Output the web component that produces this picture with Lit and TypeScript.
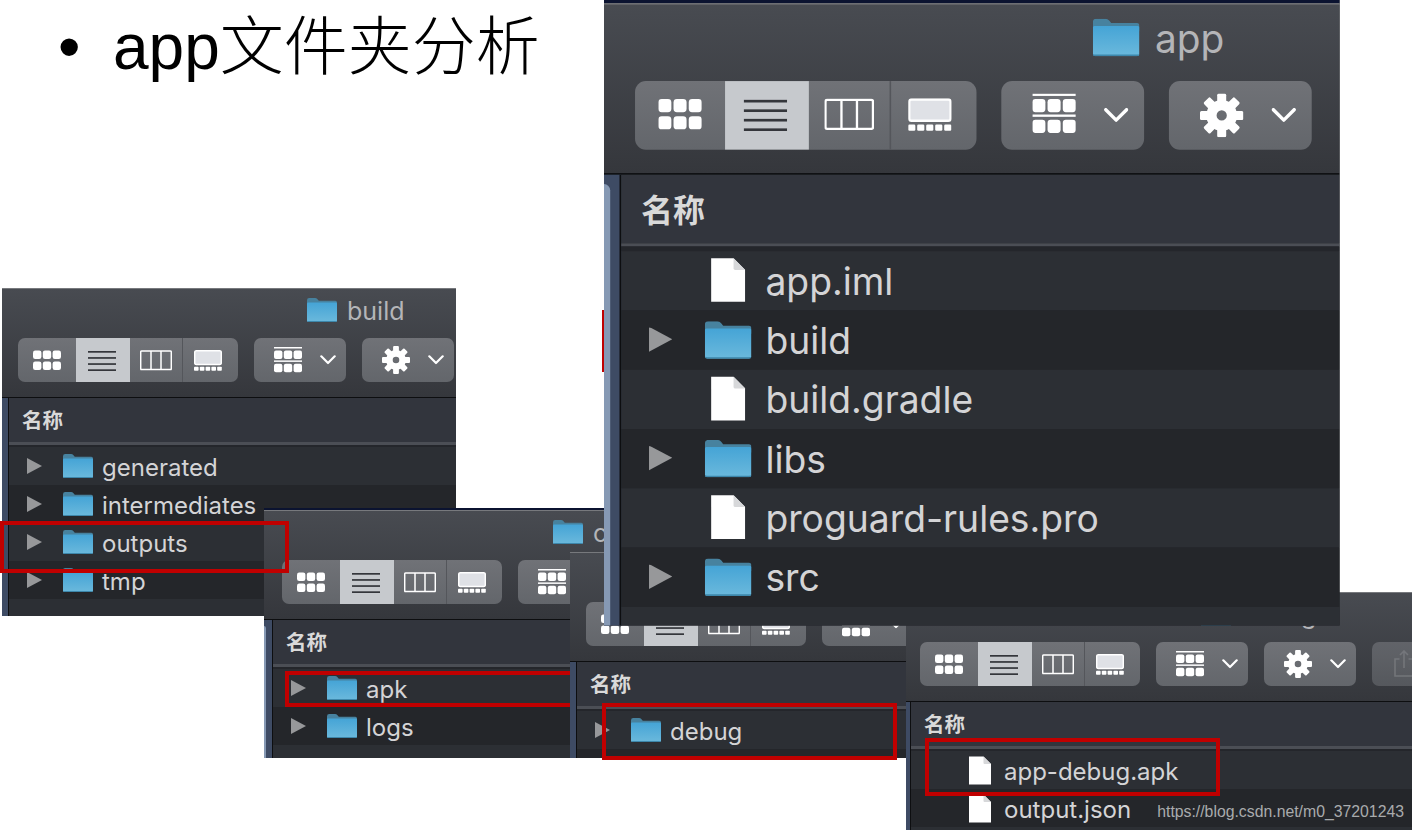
import { LitElement, html, css, svg } from "lit";
import { customElement, property } from "lit/decorators.js";

const folder = svg`<svg class="folder" viewBox="0 0 30 24" width="30" height="24">
  <defs><linearGradient id="fb" x1="0" y1="0" x2="0" y2="1"><stop offset="0" stop-color="#45a4d6"/><stop offset="1" stop-color="#6bb9dc"/></linearGradient></defs>
  <path d="M0 2.2Q0 0 2.2 0H8Q9.5 0 10.5 1.2L11.8 2.8H28.4Q30 2.8 30 4.6V8H0Z" fill="#47829f"/>
  <path d="M0 5.6Q0 4.6 1 4.6L29 4.6Q30 4.6 30 5.6V22.4Q30 24 28.4 24H1.6Q0 24 0 22.4Z" fill="url(#fb)"/>
  <path d="M0 22.4V22.6Q0 24 1.6 24H28.4Q30 24 30 22.6V22.4Q30 23 28.4 23H1.6Q0 23 0 22.4Z" fill="#3d87ab"/>
</svg>`;

const file = svg`<svg class="file" viewBox="0 0 22 28" width="22" height="29">
  <path d="M0 0H14.5L22 7.5V28H0Z" fill="#fff"/>
  <path d="M14.5 0L22 7.5H15.5Q14.5 7.5 14.5 6.5Z" fill="#d7d8da"/>
</svg>`;

const chevron = svg`<svg class="chev" viewBox="0 0 16 10" width="16" height="10"><path d="M1.3 1.3L8 8L14.7 1.3" fill="none" stroke="#fff" stroke-width="2.2" stroke-linecap="round" stroke-linejoin="round"/></svg>`;

const dots = (y: number[], x: number[], s: number, r: number) =>
  y.flatMap((yy) => x.map((xx) => svg`<rect x=${xx} y=${yy} width=${s} height=${s} rx=${r} fill="#fff"/>`));

const gridIcon = svg`<svg viewBox="0 0 28 21" width="28" height="21">${dots([0.5, 11.5], [0, 9.8, 19.6], 8.4, 2.2)}</svg>`;
const listIcon = svg`<svg viewBox="0 0 28 21" width="28" height="21">${[1, 7.1, 13.2, 19.3].map(
  (y) => svg`<rect x="0" y=${y} width="28" height="1.7" fill="#34363b"/>`
)}</svg>`;
const colsIcon = svg`<svg viewBox="0 0 32 21" width="32" height="21"><rect x=".7" y="1" width="30.6" height="18.6" rx="1" fill="none" stroke="#fff" stroke-width="1.5"/><path d="M11 1V20M21 1V20" stroke="#fff" stroke-width="1.5"/></svg>`;
const galleryIcon = svg`<svg viewBox="0 0 28 21" width="28" height="21"><rect x=".7" y=".8" width="26.6" height="13.6" rx="1.5" fill="#dfe1e6" stroke="#fff" stroke-width="1.5"/>${[0, 5.8, 11.6, 17.4, 23.2].map(
  (x) => svg`<rect x=${x} y="16.8" width="4.6" height="4" rx=".8" fill="#fff"/>`
)}</svg>`;
const arrangeIcon = svg`<svg viewBox="0 0 28 27" width="28" height="27"><rect y="0" width="28" height="1.5" fill="#fff"/><rect y="13.4" width="28" height="1.5" fill="#fff"/>${dots([3.5, 16.8], [0, 9.8, 19.6], 8.4, 2)}</svg>`;
const gearIcon = svg`<svg viewBox="-14 -14 28 28" width="28" height="28"><circle r="6.6" fill="none" stroke="#fff" stroke-width="6.6"/>${[0, 45, 90, 135, 180, 225, 270, 315].map(
  (a) => svg`<rect x="-2.9" y="-14" width="5.8" height="6" rx="1" fill="#fff" transform="rotate(${a})"/>`
)}</svg>`;
const shareIcon = svg`<svg viewBox="0 0 20 28" width="20" height="28"><path d="M5.5 9H1V26H19V9H14.5M10 18V1M6 5L10 1L14 5" fill="none" stroke="#8c8e92" stroke-width="1.6"/></svg>`;

interface Row {
  name: string;
  kind: "folder" | "file";
}

@customElement("finder-window")
class FinderWindow extends LitElement {
  @property({ type: Number }) left = 0;
  @property({ type: Number }) top = 0;
  @property({ type: Number }) w = 400;
  @property({ type: Number }) h = 300;
  @property({ type: Number }) sx = 1;
  @property({ type: Number }) sy = 1;
  @property({ type: Number }) crop = 0;
  @property({ type: Number }) navy = 0;
  @property({ type: Number }) titleAt = 300;
  @property() name = "";
  @property({ type: Boolean }) share = false;
  @property({ attribute: false }) rows: Row[] = [];

  static styles = css`
    :host {
      display: block;
      position: absolute;
      transform-origin: 0 0;
      overflow: hidden;
      background: #23252a;
      font-family: Inter, "Liberation Sans", sans-serif;
    }
    .navy {
      background: #0b1330;
    }
    .toolbar {
      height: 110px;
      box-sizing: border-box;
      border-top: 1px solid #77797d;
      border-bottom: 1px solid #0d0e10;
      background: linear-gradient(#484b51, #35373c);
      display: flex;
      flex-direction: column;
    }
    .title {
      height: 49px;
      box-sizing: border-box;
      padding-top: 9px;
      display: flex;
      align-items: flex-start;
      gap: 10px;
      color: #b4b5b8;
      font-size: 25px;
      line-height: 25px;
      letter-spacing: 0;
    }
    .title span {
      padding-top: 1px;
    }
    .controls {
      display: flex;
      gap: 16px;
    }
    .group {
      height: 44px;
      flex: none;
      border-radius: 7px;
      background: linear-gradient(#707277, #63666b);
      display: flex;
      align-items: center;
      overflow: hidden;
    }
    .seg {
      height: 100%;
      box-sizing: border-box;
      display: flex;
      align-items: center;
      justify-content: center;
    }
    .s1 { width: 58px; }
    .s2 { width: 54px; background: #c6c9cd; padding-right: 2px; }
    .s3 { width: 52px; }
    .s4 { width: 56px; border-left: 1px solid #54565b; padding-right: 5px; }
    .drop {
      width: 92px;
      box-sizing: border-box;
      padding-left: 20px;
      gap: 17px;
    }
    .drop .ic {
      width: 29px;
      display: flex;
    }
    .chev { display: block; }
    .sharebtn {
      width: 92px;
      opacity: 0.7;
      padding-left: 22px;
      box-sizing: border-box;
    }
    .body {
      display: flex;
      height: 500px;
    }
    .side {
      flex: none;
      background: #3e4b64;
      border-right: 1px solid #0d0e10;
      position: relative;
    }
    .hl {
      height: 100%;
      margin-top: 6px;
      background: #8699b4;
      border-radius: 0 4px 0 0;
    }
    .main {
      flex: 1;
      min-width: 0;
    }
    .head {
      height: 44px;
      box-sizing: border-box;
      padding: 0 0 2px 13px;
      background: #32353d;
      display: flex;
      align-items: center;
      color: #d9d9d9;
      font: 700 20.5px "Noto Sans CJK SC", sans-serif;
    }
    .sep {
      height: 2.5px;
      background: #4b4e55;
    }
    .gap {
      height: 2.5px;
      background: #24262b;
    }
    .row {
      height: 38px;
      display: flex;
      align-items: center;
      padding-left: 18px;
      color: #d4d4d6;
      font-size: 24px;
      white-space: nowrap;
      background: #2c2f34;
    }
    .row:nth-child(even) {
      background: #24262a;
    }
    .label {
      padding-top: 2.5px;
    }
    .twist {
      width: 15px;
      height: 16px;
      flex: none;
      background: #97989a;
      clip-path: polygon(0 0, 100% 50%, 0 100%);
    }
    .twist.none {
      background: none;
    }
    .icon {
      width: 30px;
      flex: none;
      margin-left: 21px;
      margin-right: 9px;
      display: flex;
      justify-content: center;
    }
    svg { display: block; flex: none; }
  `;

  render() {
    const c = this.crop;
    this.style.left = `${this.left}px`;
    this.style.top = `${this.top}px`;
    this.style.width = `${this.w / this.sx}px`;
    this.style.height = `${this.h / this.sy}px`;
    this.style.transform = `scale(${this.sx}, ${this.sy})`;
    return html`
      ${this.navy ? html`<div class="navy" style="height:${this.navy}px"></div>` : ""}
      <div class="toolbar" style="padding-left:${18 - c}px">
        <div class="title" style="padding-left:${this.titleAt - 18}px">${folder}<span>${this.name}</span></div>
        <div class="controls">
          <div class="group">
            <div class="seg s1">${gridIcon}</div>
            <div class="seg s2">${listIcon}</div>
            <div class="seg s3">${colsIcon}</div>
            <div class="seg s4">${galleryIcon}</div>
          </div>
          <div class="group drop"><span class="ic">${arrangeIcon}</span>${chevron}</div>
          <div class="group drop"><span class="ic">${gearIcon}</span>${chevron}</div>
          ${this.share ? html`<div class="group sharebtn">${shareIcon}</div>` : ""}
        </div>
      </div>
      <div class="body">
        <div class="side" style="width:${8 - c}px">
          ${c < 2 ? html`<div class="hl" style="width:${2 - c}px"></div>` : ""}
        </div>
        <div class="main">
          <div class="head">名称</div>
          <div class="sep"></div>
          <div class="gap"></div>
          <div>
            ${this.rows.map(
              (r) => html`<div class="row">
                <span class="twist ${r.kind === "file" ? "none" : ""}"></span>
                <span class="icon">${r.kind === "file" ? file : folder}</span>
                <span class="label">${r.name}</span>
              </div>`
            )}
            <div class="row"></div>
          </div>
        </div>
      </div>
    `;
  }
}

const d = (name: string): Row => ({ name, kind: "folder" });
const f = (name: string): Row => ({ name, kind: "file" });

const marks = {
  a: "left:0;top:521px;width:289px;height:52px",
  b: "left:285px;top:671px;width:330px;height:36px",
  c: "left:602px;top:703px;width:295px;height:57px",
  d: "left:925px;top:738px;width:295px;height:58px",
};

@customElement("app-root")
class AppRoot extends LitElement {
  static styles = css`
    :host {
      display: block;
      position: relative;
      width: 1414px;
      height: 830px;
      overflow: hidden;
      background: #fff;
    }
    .heading {
      display: flex;
      align-items: baseline;
      padding: 9px 0 0 58px;
      font: 64px/64px "Liberation Sans", "Noto Sans CJK SC", sans-serif;
      font-weight: 400;
      color: #000;
      letter-spacing: 0;
    }
    .bullet {
      width: 55px;
      flex: none;
    }
    .cjk {
      font-family: "Noto Sans CJK SC", sans-serif;
      font-weight: 300;
    }
    .mark {
      position: absolute;
      box-sizing: border-box;
      border: 4px solid #c00000;
    }
    .sliver {
      position: absolute;
      left: 602px;
      top: 310px;
      width: 2px;
      height: 62px;
      background: #c00000;
    }
    .wm {
      position: absolute;
      right: 10px;
      bottom: 9px;
      font: 15.8px "Liberation Sans", sans-serif;
      color: #a9abad;
    }
  `;

  render() {
    return html`
      <div class="heading"><span class="bullet">•</span><span>app<span class="cjk">文件夹分析</span></span></div>

      <div class="sliver"></div>
      <finder-window .left=${2} .top=${288} .w=${454} .h=${328} .crop=${2} .titleAt=${307}
        name="build" .rows=${[d("generated"), d("intermediates"), d("outputs"), d("tmp")]}></finder-window>
      <finder-window .left=${264} .top=${508} .w=${420} .h=${250} .navy=${2} .crop=${0} .titleAt=${289}
        name="outputs" .rows=${[d("apk"), d("logs")]}></finder-window>
      <div class="mark" style=${marks.a}></div>
      <div class="mark" style=${marks.b}></div>
      <finder-window .left=${570} .top=${552} .w=${336} .h=${206} .crop=${2} .titleAt=${250}
        name="apk" .rows=${[d("debug")]}></finder-window>
      <div class="mark" style=${marks.c}></div>
      <finder-window .left=${906} .top=${592} .w=${506} .h=${238} .crop=${4} .titleAt=${299} .share=${true}
        name="debug" .rows=${[f("app-debug.apk"), f("output.json")]}></finder-window>
      <div class="mark" style=${marks.d}></div>
      <finder-window .left=${604} .top=${0} .w=${736} .h=${626} .sx=${1.552} .sy=${1.56} .navy=${1.5} .crop=${-2} .titleAt=${313}
        name="app" .rows=${[f("app.iml"), d("build"), f("build.gradle"), d("libs"), f("proguard-rules.pro"), d("src")]}></finder-window>
      <div class="wm">https://blog.csdn.net/m0_37201243</div>
    `;
  }
}
